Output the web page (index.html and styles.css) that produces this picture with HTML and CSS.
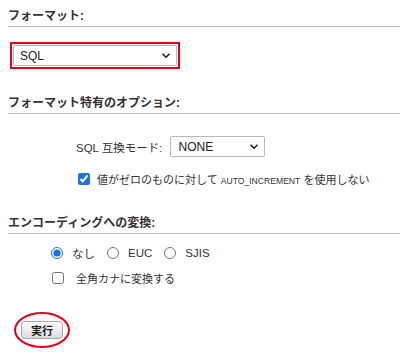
FILE: index.html
```html
<!DOCTYPE html>
<html lang="ja">
<head>
    <meta charset="UTF-8">
    <meta name="viewport" content="width=device-width, initial-scale=1.0">
    <title>エクスポート</title>
    <link rel="stylesheet" href="styles.css">
</head>
<body>
    <form class="export" onsubmit="return false;">
        <h3 class="section-title">フォーマット:</h3>
        <div class="format-row">
            <span class="mark-box">
                <span class="select-wrap format-select">
                    <select>
                        <option>SQL</option>
                        <option>CSV</option>
                        <option>JSON</option>
                    </select>
                    <svg class="chevron" viewBox="0 0 8 6" width="8" height="6"><path d="M1 1.2 L4 4.3 L7 1.2" fill="none" stroke="#222" stroke-width="1.6" stroke-linecap="round" stroke-linejoin="round"/></svg>
                </span>
            </span>
        </div>

        <h3 class="section-title">フォーマット特有のオプション:</h3>
        <div class="options">
            <div class="compat-row">
                <label class="compat-label">SQL 互換モード:</label>
                <span class="select-wrap compat-select">
                    <select>
                        <option>NONE</option>
                        <option>ANSI</option>
                        <option>MYSQL323</option>
                    </select>
                    <svg class="chevron" viewBox="0 0 8 6" width="8" height="6"><path d="M1 1.2 L4 4.3 L7 1.2" fill="none" stroke="#222" stroke-width="1.6" stroke-linecap="round" stroke-linejoin="round"/></svg>
                </span>
            </div>
            <label class="check-row auto-inc">
                <input type="checkbox" checked>
                <span>値がゼロのものに対して <span class="code">AUTO_INCREMENT</span> を使用しない</span>
            </label>
        </div>

        <h3 class="section-title">エンコーディングへの変換:</h3>
        <div class="encoding">
            <div class="radio-row">
                <label class="radio-item"><input type="radio" name="enc" checked> なし</label>
                <label class="radio-item"><input type="radio" name="enc"> EUC</label>
                <label class="radio-item"><input type="radio" name="enc"> SJIS</label>
            </div>
            <label class="check-row kana">
                <input type="checkbox">
                <span>全角カナに変換する</span>
            </label>
        </div>

        <div class="submit-row">
            <span class="mark-ellipse">
                <button type="submit">実行</button>
            </span>
        </div>
    </form>
</body>
</html>
```

FILE: styles.css
```css
body {
    margin: 0;
    padding: 0;
    background: #fff;
    color: #333;
    font-family: "Liberation Sans", "Noto Sans CJK JP", sans-serif;
    font-size: 11px;
}

.export {
    padding: 0 0 0 8px;
}

.section-title {
    margin: 0;
    padding-bottom: 2px;
    font-size: 12px;
    line-height: 16px;
    font-weight: bold;
    color: #333;
    border-bottom: 1px solid #bdbdbd;
}

.section-title:first-child {
    margin-top: 8px;
}

/* format selector with the red mark */
.format-row {
    padding: 15px 0 0 2px;
    display: flex;
}

.mark-box {
    display: flex;
    padding: 1px;
    border: 2px solid #e4001b;
}

.select-wrap {
    position: relative;
    display: flex;
}

.select-wrap select {
    appearance: none;
    -webkit-appearance: none;
    margin: 0;
    height: 21px;
    padding: 0 20px 0 6px;
    border: 1px solid #b9b9b9;
    border-radius: 2px;
    background: #fff;
    color: #222;
    font-family: "Liberation Sans", "Noto Sans CJK JP", sans-serif;
    font-size: 12px;
}

.select-wrap .chevron {
    position: absolute;
    right: 7px;
    top: 8px;
    pointer-events: none;
}

.format-select select {
    width: 164px;
}

.format-row + .section-title {
    margin-top: 26px;
}

/* format specific options */
.options {
    padding: 22px 0 0 68px;
}

.compat-row {
    display: flex;
    align-items: center;
    gap: 8px;
}

.compat-label {
    font-size: 11.5px;
    color: #333;
}

.compat-select select {
    width: 95px;
    font-size: 12px;
    padding-left: 7px;
}

.check-row {
    display: flex;
    align-items: center;
    color: #333;
}

.check-row input {
    margin: 0;
    width: 12px;
    height: 12px;
    accent-color: #1b73e8;
}

.auto-inc {
    margin-top: 14px;
    padding-left: 2px;
    gap: 7px;
}

.code {
    font-size: 8.6px;
}

.options + .section-title {
    margin-top: 28px;
}

/* encoding */
.encoding {
    padding: 11px 0 0 43px;
}

.radio-row {
    display: flex;
    align-items: center;
}

.radio-item {
    display: flex;
    align-items: center;
    gap: 9px;
    margin-right: 12px;
    font-size: 11.5px;
}

.radio-item input {
    margin: 0;
    width: 12px;
    height: 12px;
    accent-color: #1b73e8;
}

.kana {
    margin-top: 9px;
    padding-left: 1px;
    gap: 12px;
    font-size: 11px;
}

/* submit */
.submit-row {
    padding: 26px 0 0 6px;
    display: flex;
}

.mark-ellipse {
    display: flex;
    padding: 7px 5px;
    border: 2px solid #e4001b;
    border-radius: 50%;
}

.mark-ellipse button {
    margin: 0;
    width: 42px;
    height: 18px;
    padding: 0;
    border: 1px solid #a9a9a9;
    border-radius: 4px;
    background: linear-gradient(#ffffff, #dcdcdc);
    color: #222;
    font-family: "Liberation Sans", "Noto Sans CJK JP", sans-serif;
    font-size: 11px;
    font-weight: bold;
    cursor: pointer;
}
```
